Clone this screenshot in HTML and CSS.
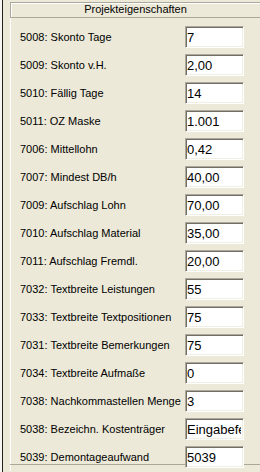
FILE: index.html
```html
<!DOCTYPE html>
<html lang="de">
<head>
    <meta charset="UTF-8">
    <title>Projekteigenschaften</title>
    <link rel="stylesheet" href="styles.css">
</head>
<body>

<div class="frame">
    <div class="group">
        <div class="group-title">Projekteigenschaften</div>
        <div class="props">
            <div class="row"><label>5008: Skonto Tage</label><input type="text" value="7"></div>
            <div class="row"><label>5009: Skonto v.H.</label><input type="text" value="2,00"></div>
            <div class="row"><label>5010: Fällig Tage</label><input type="text" value="14"></div>
            <div class="row"><label>5011: OZ Maske</label><input type="text" value="1.001"></div>
            <div class="row"><label>7006: Mittellohn</label><input type="text" value="0,42"></div>
            <div class="row"><label>7007: Mindest DB/h</label><input type="text" value="40,00"></div>
            <div class="row"><label>7009: Aufschlag Lohn</label><input type="text" value="70,00"></div>
            <div class="row"><label>7010: Aufschlag Material</label><input type="text" value="35,00"></div>
            <div class="row"><label>7011: Aufschlag Fremdl.</label><input type="text" value="20,00"></div>
            <div class="row"><label>7032: Textbreite Leistungen</label><input type="text" value="55"></div>
            <div class="row"><label>7033: Textbreite Textpositionen</label><input type="text" value="75"></div>
            <div class="row"><label>7031: Textbreite Bemerkungen</label><input type="text" value="75"></div>
            <div class="row"><label>7034: Textbreite Aufmaße</label><input type="text" value="0"></div>
            <div class="row"><label>7038: Nachkommastellen Menge</label><input type="text" value="3"></div>
            <div class="row"><label>5038: Bezeichn. Kostenträger</label><input type="text" value="Eingabefenster"></div>
            <div class="row last"><label>5039: Demontageaufwand</label><input type="text" value="5039"></div>
        </div>
    </div>
</div>

</body>
</html>
```

FILE: styles.css
```css
html, body {
    height: 100%;
}
body {
    margin: 0;
    background-color: #ece9d8;
    border-left: 2px solid #f7f6f0;
    font-family: Tahoma, "Liberation Sans", Arial, sans-serif;
    font-size: 11px;
    color: #000;
    overflow: hidden;
}
.frame {
    height: 100%;
    border-left: 1px solid #222;
    padding: 2px 0 0 7px;
}
.group-title {
    height: 14px;
    line-height: 13px;
    text-align: center;
    border-top: 1px solid #aca899;
    border-left: 1px solid #aca899;
    border-bottom: 1px solid #aca899;
    box-shadow: inset 1px 1px 0 #fff;
}
.props {
    border-left: 1px solid #fff;
    padding: 5px 0 0 9px;
}
.row {
    position: relative;
    display: flex;
    align-items: center;
    height: 28px;
}
.row label {
    flex: 1;
    white-space: nowrap;
    overflow: hidden;
}
.row input {
    position: relative;
    z-index: 1;
    box-sizing: border-box;
    width: 59px;
    height: 22px;
    margin: 0 16px 0 0;
    padding: 1px 2px 0 1px;
    font-family: inherit;
    font-size: 13px;
    color: #000;
    background-color: #fff;
    border: 1px solid;
    border-color: #aca899 #fff #fff #aca899;
    box-shadow: inset 1px 1px 0 #716f64, inset -1px -1px 0 #f1efe2;
    outline: none;
}
.row.last::after {
    content: "";
    position: absolute;
    left: -10px;
    right: 0;
    top: 21px;
    height: 1px;
    background-color: #aca899;
}
```
